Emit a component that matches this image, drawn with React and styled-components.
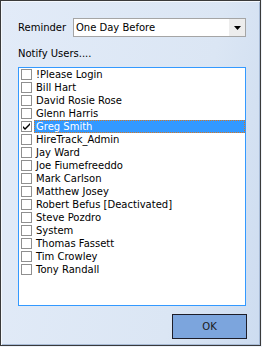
import React from "react";
import styled, { createGlobalStyle } from "styled-components";

const users = [
  "!Please Login",
  "Bill Hart",
  "David Rosie Rose",
  "Glenn Harris",
  "Greg Smith",
  "HireTrack_Admin",
  "Jay Ward",
  "Joe Fiumefreeddo",
  "Mark Carlson",
  "Matthew Josey",
  "Robert Befus [Deactivated]",
  "Steve Pozdro",
  "System",
  "Thomas Fassett",
  "Tim Crowley",
  "Tony Randall",
];

export default function App() {
  return (
    <>
      <GlobalStyle />
      <Window>
        <FieldRow>
          <Label>Reminder</Label>
          <Select>
            <span>One Day Before</span>
            <DropButton>
              <svg width="7" height="4" viewBox="0 0 7 4">
                <path d="M0 0h7L3.5 4z" fill="#000" />
              </svg>
            </DropButton>
          </Select>
        </FieldRow>
        <Caption>Notify Users....</Caption>
        <UserList>
          {users.map((name) => {
            const active = name === "Greg Smith";
            return (
              <Item key={name}>
                <Check $checked={active}>
                  {active && (
                    <svg width="9" height="9" viewBox="0 0 9 9">
                      <path d="M1 4l2 2 5-5v2l-5 5-2-2z" fill="#000" />
                    </svg>
                  )}
                </Check>
                <ItemText $selected={active}>{name}</ItemText>
              </Item>
            );
          })}
        </UserList>
        <Footer>
          <OkButton>OK</OkButton>
        </Footer>
      </Window>
    </>
  );
}

const GlobalStyle = createGlobalStyle`
  html, body {
    margin: 0;
    padding: 0;
    background: #eef3fa;
  }
  body {
    font-family: "DejaVu Sans", Verdana, sans-serif;
    font-size: 10px;
    color: #000;
  }
`;

const Window = styled.div`
  box-sizing: border-box;
  width: 261px;
  height: 346px;
  border: 1px solid #3a3a3a;
  box-shadow: inset 1px 1px 0 #f4f8fd, inset -1px -1px 0 #a8bbd6;
  background: linear-gradient(100deg, #e2ebf8 0%, #dbe6f4 70%, #cddcf0 100%);
  padding: 17px 0 0 17px;
  display: flex;
  flex-direction: column;
`;

const FieldRow = styled.div`
  display: flex;
  align-items: center;
  height: 19px;
`;

const Label = styled.div`
  width: 55px;
`;

const Select = styled.div`
  box-sizing: border-box;
  width: 173px;
  height: 19px;
  border: 1px solid #a5a5a5;
  background: #fff;
  display: flex;
  align-items: center;
  justify-content: space-between;
  padding-left: 2px;
`;

const DropButton = styled.div`
  width: 16px;
  height: 17px;
  background: #ededed;
  display: flex;
  align-items: center;
  justify-content: center;
`;

const Caption = styled.div`
  margin-top: 10px;
  height: 13px;
  line-height: 13px;
`;

const UserList = styled.div`
  box-sizing: border-box;
  margin-top: 7px;
  width: 228px;
  height: 239px;
  border: 1px solid #3399ff;
  background: #fff;
  display: flex;
  flex-direction: column;
`;

const Item = styled.div`
  display: flex;
  align-items: center;
  height: 13px;
  padding-left: 2px;
`;

const Check = styled.div`
  box-sizing: border-box;
  width: 11px;
  height: 11px;
  border: 1px solid #8f8f8f;
  background: #fff;
  display: flex;
  align-items: center;
  justify-content: center;
  margin-right: 2px;
`;

const ItemText = styled.div`
  flex: 1;
  box-sizing: border-box;
  height: 13px;
  line-height: 11px;
  padding-left: 1px;
  white-space: nowrap;
  color: ${(p) => (p.$selected ? "#fff" : "#000")};
  background: ${(p) => (p.$selected ? "#3399ff" : "transparent")};
  border: 1px ${(p) => (p.$selected ? "dotted #d9781f" : "solid transparent")};
`;

const Footer = styled.div`
  display: flex;
  justify-content: flex-end;
  width: 228px;
  margin-top: 8px;
`;

const OkButton = styled.button`
  box-sizing: border-box;
  width: 75px;
  height: 25px;
  margin-right: -1px;
  border: 1px solid #1d1d28;
  background: #7ca5dd;
  font-family: "DejaVu Sans", Verdana, sans-serif;
  font-size: 10px;
  color: #1a1a1a;
  padding: 0;
`;
